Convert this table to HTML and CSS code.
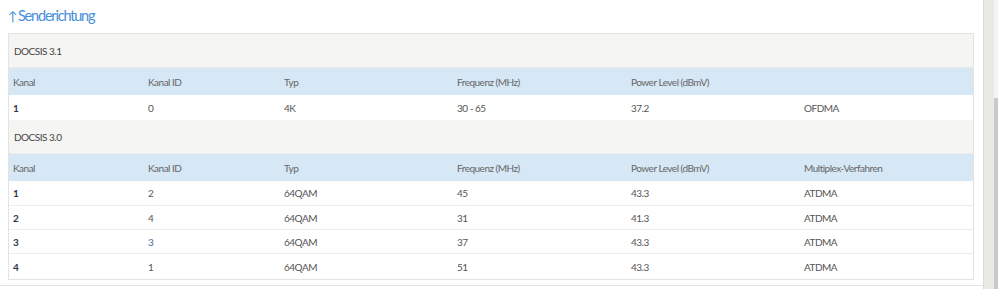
FILE: index.html
```html
<!DOCTYPE html>
<html>
<head>
<meta charset="utf-8">
<link rel="stylesheet" href="styles.css">
</head>
<body>
<div class="page">
  <div class="main">
    <h2 class="title"><span class="arrow">↑</span>Senderichtung</h2>
    <div class="panel">
      <div class="section">DOCSIS 3.1</div>
      <table class="grid">
        <colgroup><col class="c1"><col class="c2"><col class="c3"><col class="c4"><col class="c5"><col class="c6"></colgroup>
        <tr class="head"><td>Kanal</td><td>Kanal ID</td><td>Typ</td><td>Frequenz (MHz)</td><td>Power Level (dBmV)</td><td></td></tr>
        <tr><td class="num">1</td><td>0</td><td>4K</td><td>30 - 65</td><td>37.2</td><td>OFDMA</td></tr>
      </table>
      <div class="section">DOCSIS 3.0</div>
      <table class="grid">
        <colgroup><col class="c1"><col class="c2"><col class="c3"><col class="c4"><col class="c5"><col class="c6"></colgroup>
        <tr class="head"><td>Kanal</td><td>Kanal ID</td><td>Typ</td><td>Frequenz (MHz)</td><td>Power Level (dBmV)</td><td>Multiplex-Verfahren</td></tr>
        <tr class="first"><td class="num">1</td><td>2</td><td>64QAM</td><td>45</td><td>43.3</td><td>ATDMA</td></tr>
        <tr><td class="num">2</td><td>4</td><td>64QAM</td><td>31</td><td>41.3</td><td>ATDMA</td></tr>
        <tr><td class="num">3</td><td class="link">3</td><td>64QAM</td><td>37</td><td>43.3</td><td>ATDMA</td></tr>
        <tr><td class="num">4</td><td>1</td><td>64QAM</td><td>51</td><td>43.3</td><td>ATDMA</td></tr>
      </table>
    </div>
    <div class="footline"></div>
  </div>
  <div class="side"></div>
  <div class="scroll"><div class="thumb"></div></div>
</div>
</body>
</html>
```
FILE: styles.css
```css
html, body { margin: 0; padding: 0; background: #fff; }
body { font-family: "Source Sans Pro", Lato, "Open Sans", sans-serif; color: #555; }
.page { display: flex; height: 289px; overflow: hidden; }
.main { width: 983px; flex: none; }
.side { width: 10px; flex: none; background: #ebe9e3; border-left: 1px solid #dedbd3; }
.scroll { flex: 1; background: #f4f4f4; display: flex; flex-direction: column; }
.thumb { margin-top: 98px; flex: 1; background: #c9c9c9; }
.title { margin: 0; padding: 6px 0 0 8px; height: 27px; box-sizing: border-box; font-size: 14.5px; letter-spacing: -1.2px; font-weight: normal; color: #4a8fdc; line-height: 20px; }
.arrow { display: inline-block; margin-right: 4px; letter-spacing: 0; font-size: 13px; width: 6px; }
.panel { margin-left: 8px; width: 966px; border: 1px solid #e3e3e1; box-sizing: border-box; margin-top: 6px; }
.section { background: #f5f5f3; height: 34px; line-height: 34px; padding-left: 5px; font-size: 10px; letter-spacing: -0.5px; color: #444; border-bottom: 1px solid #ecebe8; box-sizing: border-box; }
.grid { width: 100%; border-collapse: collapse; table-layout: fixed; font-size: 10px; letter-spacing: -0.5px; }
.c1 { width: 135px; } .c2 { width: 136px; } .c3 { width: 173px; } .c4 { width: 174px; } .c5 { width: 173px; } .c6 { width: 173px; }
.grid td { padding: 0 0 0 4px; height: 23px; border-bottom: 1px solid #ececec; color: #555; }
.grid tr.first td { height: 24px; }
.grid tr.head td { background: #d6e7f5; height: 27px; border-bottom: none; color: #666; }
.grid tr:last-child td { border-bottom: none; height: 25px; }
.grid td.num { font-weight: bold; color: #334; }
.grid td.link { color: #3b6a9c; }
.footline { margin-top: 5px; border-top: 1px solid #e3e3e3; }
```
